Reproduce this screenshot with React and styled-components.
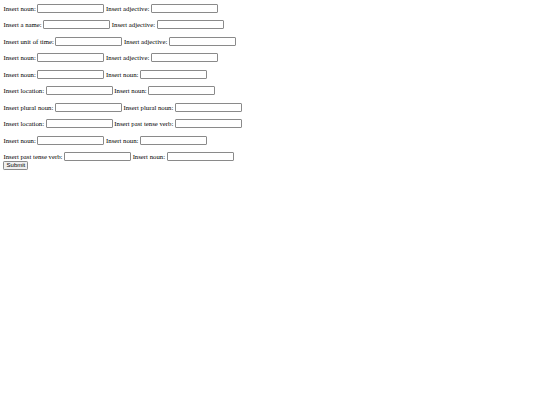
import React from "react";
import styled, { createGlobalStyle } from "styled-components";

const Global = createGlobalStyle`
  html, body { margin: 0; padding: 0; background: #ffffff; }
  body { padding: 3.4px; font-family: "Liberation Serif", "Times New Roman", serif; color: #000; }
`;

const Form = styled.form`
  display: flex;
  flex-direction: column;
  align-items: flex-start;
`;

const Row = styled.div`
  display: flex;
  align-items: center;
  height: 9px;
  margin-top: 0.4px;
  margin-bottom: ${(p) => (p.$last ? "0" : "7.1px")};
  font-size: 6.75px;
  white-space: nowrap;
`;

const Label = styled.span`
  margin-right: 1.6px;
  line-height: 9px;
`;

const Input = styled.input`
  box-sizing: border-box;
  width: 67px;
  height: 9px;
  margin: 0 1.6px 0 0;
  padding: 0 1px;
  border: 0.6px solid #8a8a8a;
  border-radius: 1px;
  background: #fff;
  font-size: 5.7px;
  font-family: "Liberation Sans", Arial, sans-serif;
  outline: none;
`;

const Submit = styled.button`
  box-sizing: border-box;
  width: 25px;
  height: 8.5px;
  margin: 0;
  padding: 0;
  border: 0.6px solid #8a8a8a;
  border-radius: 1.2px;
  background: #efefef;
  font-family: "Liberation Sans", Arial, sans-serif;
  font-size: 6px;
  line-height: 1;
  color: #000;
`;

const rows = [
  ["Insert noun:", "Insert adjective:"],
  ["Insert a name:", "Insert adjective:"],
  ["Insert unit of time:", "Insert adjective:"],
  ["Insert noun:", "Insert adjective:"],
  ["Insert noun:", "Insert noun:"],
  ["Insert location:", "Insert noun:"],
  ["Insert plural noun:", "Insert plural noun:"],
  ["Insert location:", "Insert past tense verb:"],
  ["Insert noun:", "Insert noun:"],
  ["Insert past tense verb:", "Insert noun:"],
];

export default function App() {
  return (
    <>
      <Global />
      <Form onSubmit={(e) => e.preventDefault()}>
        {rows.map((r, i) => (
          <Row key={i} $last={i === rows.length - 1}>
            <Label>{r[0]}</Label>
            <Input type="text" />
            <Label>{r[1]}</Label>
            <Input type="text" />
          </Row>
        ))}
        <Submit type="submit">Submit</Submit>
      </Form>
    </>
  );
}
